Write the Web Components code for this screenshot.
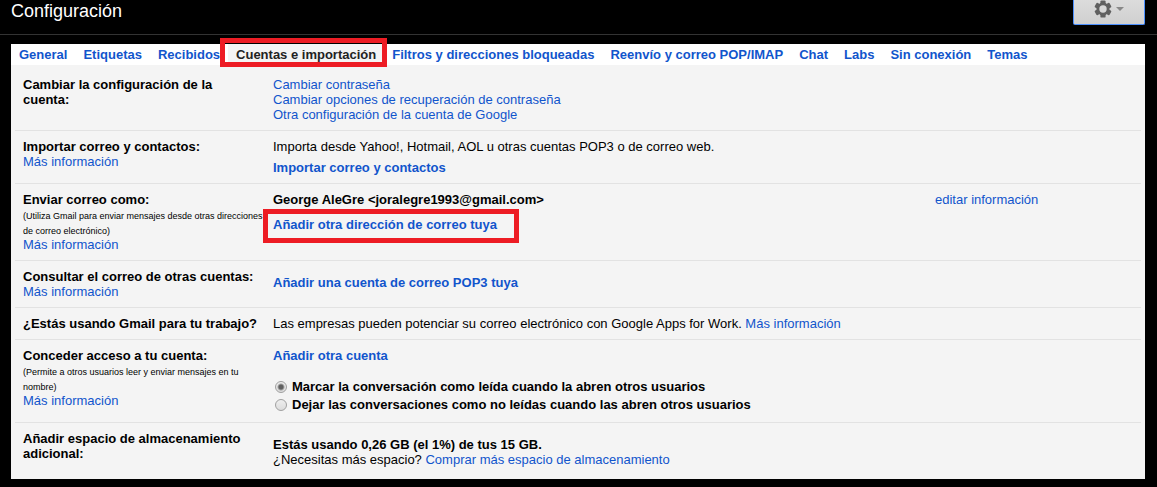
<!DOCTYPE html>
<html lang="es">
<head>
<meta charset="utf-8">
<meta name="viewport" content="width=device-width, initial-scale=1">
<title>Configuración</title>
<style>
  body { margin: 0; background: #000; color: #000; font: 13px/15px "Liberation Sans", Arial, sans-serif; }
</style>
</head>
<body>
<settings-page>
  <settings-header slot="header">Configuración</settings-header>
  <settings-tabs slot="tabs">
    <settings-tab>General</settings-tab>
    <settings-tab>Etiquetas</settings-tab>
    <settings-tab>Recibidos</settings-tab>
    <settings-tab active>Cuentas e importación</settings-tab>
    <settings-tab>Filtros y direcciones bloqueadas</settings-tab>
    <settings-tab>Reenvío y correo POP/IMAP</settings-tab>
    <settings-tab>Chat</settings-tab>
    <settings-tab>Labs</settings-tab>
    <settings-tab>Sin conexión</settings-tab>
    <settings-tab>Temas</settings-tab>
  </settings-tabs>

  <settings-row label="Cambiar la configuración de la cuenta:">
    <text-link>Cambiar contraseña</text-link>
    <text-link>Cambiar opciones de recuperación de contraseña</text-link>
    <text-link>Otra configuración de la cuenta de Google</text-link>
  </settings-row>
  <settings-row label="Importar correo y contactos:" more gap="small">
    <div>Importa desde Yahoo!, Hotmail, AOL u otras cuentas POP3 o de correo web.</div>
    <text-link strong>Importar correo y contactos</text-link>
  </settings-row>
  <settings-row label="Enviar correo como:" note="(Utiliza Gmail para enviar mensajes desde otras direcciones de correo electrónico)" more gap="medium">
    <strong>George AleGre &lt;joralegre1993@gmail.com&gt;</strong>
    <text-link strong marked>Añadir otra dirección de correo tuya</text-link>
    <text-link slot="action">editar información</text-link>
  </settings-row>
  <settings-row label="Consultar el correo de otras cuentas:" more lowered>
    <text-link strong>Añadir una cuenta de correo POP3 tuya</text-link>
  </settings-row>
  <settings-row label="¿Estás usando Gmail para tu trabajo?">
    <div>Las empresas pueden potenciar su correo electrónico con Google Apps for Work. <text-link inline>Más información</text-link></div>
  </settings-row>
  <settings-row label="Conceder acceso a tu cuenta:" note="(Permite a otros usuarios leer y enviar mensajes en tu nombre)" more gap="large">
    <text-link strong>Añadir otra cuenta</text-link>
    <read-choice></read-choice>
  </settings-row>
  <settings-row label="Añadir espacio de almacenamiento adicional:" lowered>
    <strong>Estás usando 0,26 GB (el 1%) de tus 15 GB.</strong>
    <div>¿Necesitas más espacio? <text-link inline>Comprar más espacio de almacenamiento</text-link></div>
  </settings-row>
</settings-page>

<script>
const define = (name, markup, setup) => {
  const template = document.createElement('template');
  template.innerHTML = markup;
  customElements.define(name, class extends HTMLElement {
    constructor() {
      super();
      this.attachShadow({ mode: 'open' }).append(template.content.cloneNode(true));
    }
    connectedCallback() { if (setup) setup(this, this.shadowRoot); }
  });
};

define('settings-page', `
  <style>
    :host { display: block; padding-bottom: 8px; }
    main { margin: 9px 12px 0 11px; background: #f4f4f4; }
    .rows { padding: 4px; }
  </style>
  <slot name="header"></slot>
  <main>
    <slot name="tabs"></slot>
    <div class="rows"><slot></slot></div>
  </main>`);

define('settings-header', `
  <style>
    :host { display: flex; justify-content: space-between; align-items: flex-start; height: 34px; padding: 0 12px 0 11px; border-bottom: 1px solid #333; }
    h1 { margin: 0; font-size: 18px; line-height: 22px; font-weight: 400; color: #fff; }
    button { display: flex; justify-content: center; align-items: center; gap: 4px; box-sizing: border-box; width: 72px; height: 25px; padding: 0 0 6px; border: 1px solid #4d90fe; border-top: 0; border-radius: 0 0 2px 2px; background: linear-gradient(#dcdcdc, #d0d0d0); }
    svg { display: block; }
  </style>
  <h1><slot></slot></h1>
  <button type="button" aria-label="Ajustes">
    <svg width="18" height="18" viewBox="-9 -9 18 18">
      <g fill="#606060">
        <rect x="-2.6" y="-8.600" width="5.200" height="17.200" rx="1.200"/>
        <rect x="-2.6" y="-8.600" width="5.200" height="17.200" rx="1.200" transform="rotate(60)"/>
        <rect x="-2.6" y="-8.600" width="5.200" height="17.200" rx="1.200" transform="rotate(120)"/>
        <circle r="6.500"/>
      </g>
      <circle r="3.700" fill="#d7d7d7"/>
    </svg>
    <svg width="8" height="4" viewBox="0 0 8 4"><path d="M0 0h8L4 4z" fill="#888"/></svg>
  </button>`);

define('settings-tabs', `
  <style>
    :host { display: block; background: #fff; }
    nav { display: flex; flex-wrap: wrap; }
  </style>
  <nav><slot></slot></nav>`);

define('settings-tab', `
  <style>
    :host { display: block; position: relative; font-weight: 700; }
    a { display: block; padding: 3px 8px; color: #15c; text-decoration: none; }
    :host([active]) a { color: #222; background: #f4f4f4; }
    :host([active])::after { content: ""; position: absolute; inset: -6px -3px -2px -8px; border: 5px solid #ed1c24; z-index: 1; pointer-events: none; }
  </style>
  <a href="#"><slot></slot></a>`);

define('text-link', `
  <style>
    :host { display: block; }
    :host([inline]) { display: inline; }
    :host([strong]) { font-weight: 700; }
    :host([marked]) { position: relative; width: fit-content; }
    :host([marked])::after { content: ""; position: absolute; inset: -8px -22px -11px -10px; border: 5px solid #ed1c24; pointer-events: none; }
    a { color: #15c; text-decoration: none; }
  </style>
  <a href="#"><slot></slot></a>`);

define('settings-row', `
  <style>
    :host { display: grid; grid-template-columns: 242px minmax(0, 1fr) 206px; padding: 8px 0 8px 8px; border-bottom: 1px solid #e2e2e2; }
    :host(:last-of-type) { border-bottom: 0; }
    h2 { margin: 0; padding-right: 4px; font: inherit; font-weight: 700; }
    small { font-size: 9px; line-height: 9px; }
    .note:empty, [hidden] { display: none; }
    .value { display: flex; flex-direction: column; padding-left: 8px; }
    :host([gap="small"]) .value { gap: 6px; }
    :host([gap="medium"]) .value { gap: 10px; }
    :host([gap="large"]) .value { gap: 16px; }
    :host([lowered]) .value { padding-top: 6px; }
  </style>
  <div>
    <h2></h2>
    <div class="note"></div>
    <text-link class="more">Más información</text-link>
  </div>
  <div class="value"><slot></slot></div>
  <div><slot name="action"></slot></div>`,
  (host, root) => {
    root.querySelector('h2').textContent = host.getAttribute('label');
    if (host.hasAttribute('note')) {
      const small = document.createElement('small');
      small.textContent = host.getAttribute('note');
      root.querySelector('.note').replaceChildren(small);
    }
    root.querySelector('.more').hidden = !host.hasAttribute('more');
  });

define('read-choice', `
  <style>
    :host { display: flex; flex-direction: column; gap: 3px; padding-bottom: 2px; font-weight: 700; }
    label { display: flex; align-items: center; gap: 5px; padding-left: 2px; }
    input { appearance: none; box-sizing: border-box; flex: none; width: 12px; height: 12px; margin: 0; border: 1px solid #a0a0a0; border-radius: 50%; background: linear-gradient(#eee, #dcdcdc); }
    input:checked { background: radial-gradient(circle, #606060 0 2px, transparent 4px), linear-gradient(#eee, #dcdcdc); }
  </style>
  <label><input type="radio" name="read" checked>Marcar la conversación como leída cuando la abren otros usuarios</label>
  <label><input type="radio" name="read">Dejar las conversaciones como no leídas cuando las abren otros usuarios</label>`);
</script>
</body>
</html>
